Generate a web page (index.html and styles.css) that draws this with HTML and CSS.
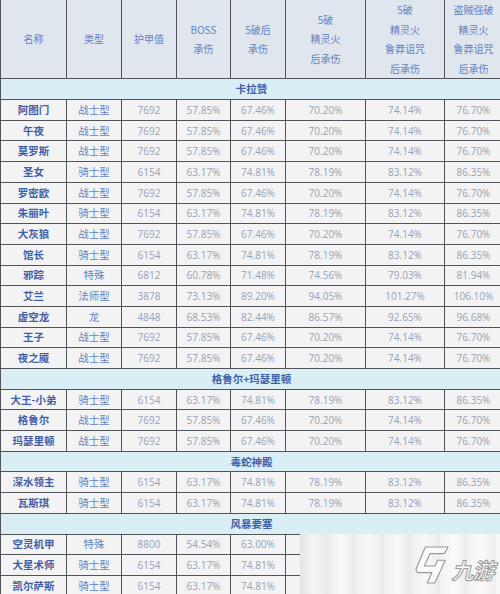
FILE: index.html
```html
<!DOCTYPE html>
<html>
<head>
<meta charset="utf-8">
<link rel="stylesheet" href="styles.css">
</head>
<body>
<div class="page">
<table class="tbl">
<colgroup>
<col class="c1"><col class="c2"><col class="c3"><col class="c4"><col class="c5"><col class="c6"><col class="c7"><col class="c8">
</colgroup>
<thead>
<tr class="head">
<th>名称</th><th>类型</th><th>护甲值</th><th>BOSS<br>承伤</th><th>5破后<br>承伤</th><th>5破<br>精灵火<br>后承伤</th><th>5破<br>精灵火<br>鲁莽诅咒<br>后承伤</th><th>盗贼强破<br>精灵火<br>鲁莽诅咒<br>后承伤</th>
</tr>
</thead>
<tbody>
<tr class="sec"><td colspan="8">卡拉赞</td></tr>
<tr><td class="n">阿图门</td><td class="t">战士型</td><td>7692</td><td>57.85%</td><td>67.46%</td><td>70.20%</td><td>74.14%</td><td>76.70%</td></tr>
<tr><td class="n">午夜</td><td class="t">战士型</td><td>7692</td><td>57.85%</td><td>67.46%</td><td>70.20%</td><td>74.14%</td><td>76.70%</td></tr>
<tr><td class="n">莫罗斯</td><td class="t">战士型</td><td>7692</td><td>57.85%</td><td>67.46%</td><td>70.20%</td><td>74.14%</td><td>76.70%</td></tr>
<tr><td class="n">圣女</td><td class="t">骑士型</td><td>6154</td><td>63.17%</td><td>74.81%</td><td>78.19%</td><td>83.12%</td><td>86.35%</td></tr>
<tr><td class="n">罗密欧</td><td class="t">战士型</td><td>7692</td><td>57.85%</td><td>67.46%</td><td>70.20%</td><td>74.14%</td><td>76.70%</td></tr>
<tr><td class="n">朱丽叶</td><td class="t">骑士型</td><td>6154</td><td>63.17%</td><td>74.81%</td><td>78.19%</td><td>83.12%</td><td>86.35%</td></tr>
<tr><td class="n">大灰狼</td><td class="t">战士型</td><td>7692</td><td>57.85%</td><td>67.46%</td><td>70.20%</td><td>74.14%</td><td>76.70%</td></tr>
<tr><td class="n">馆长</td><td class="t">骑士型</td><td>6154</td><td>63.17%</td><td>74.81%</td><td>78.19%</td><td>83.12%</td><td>86.35%</td></tr>
<tr><td class="n">邪踪</td><td class="t">特殊</td><td>6812</td><td>60.78%</td><td>71.48%</td><td>74.56%</td><td>79.03%</td><td>81.94%</td></tr>
<tr><td class="n">艾兰</td><td class="t">法师型</td><td>3878</td><td>73.13%</td><td>89.20%</td><td>94.05%</td><td>101.27%</td><td>106.10%</td></tr>
<tr><td class="n">虚空龙</td><td class="t">龙</td><td>4848</td><td>68.53%</td><td>82.44%</td><td>86.57%</td><td>92.65%</td><td>96.68%</td></tr>
<tr><td class="n">王子</td><td class="t">战士型</td><td>7692</td><td>57.85%</td><td>67.46%</td><td>70.20%</td><td>74.14%</td><td>76.70%</td></tr>
<tr><td class="n">夜之魇</td><td class="t">战士型</td><td>7692</td><td>57.85%</td><td>67.46%</td><td>70.20%</td><td>74.14%</td><td>76.70%</td></tr>
<tr class="sec"><td colspan="8">格鲁尔+玛瑟里顿</td></tr>
<tr><td class="n">大王-小弟</td><td class="t">骑士型</td><td>6154</td><td>63.17%</td><td>74.81%</td><td>78.19%</td><td>83.12%</td><td>86.35%</td></tr>
<tr><td class="n">格鲁尔</td><td class="t">战士型</td><td>7692</td><td>57.85%</td><td>67.46%</td><td>70.20%</td><td>74.14%</td><td>76.70%</td></tr>
<tr><td class="n">玛瑟里顿</td><td class="t">战士型</td><td>7692</td><td>57.85%</td><td>67.46%</td><td>70.20%</td><td>74.14%</td><td>76.70%</td></tr>
<tr class="sec"><td colspan="8">毒蛇神殿</td></tr>
<tr><td class="n">深水领主</td><td class="t">骑士型</td><td>6154</td><td>63.17%</td><td>74.81%</td><td>78.19%</td><td>83.12%</td><td>86.35%</td></tr>
<tr><td class="n">瓦斯琪</td><td class="t">骑士型</td><td>6154</td><td>63.17%</td><td>74.81%</td><td>78.19%</td><td>83.12%</td><td>86.35%</td></tr>
<tr class="sec"><td colspan="8">风暴要塞</td></tr>
<tr><td class="n">空灵机甲</td><td class="t">特殊</td><td>8800</td><td>54.54%</td><td>63.00%</td><td></td><td></td><td></td></tr>
<tr><td class="n">大星术师</td><td class="t">骑士型</td><td>6154</td><td>63.17%</td><td>74.81%</td><td></td><td></td><td></td></tr>
<tr><td class="n">凯尔萨斯</td><td class="t">骑士型</td><td>6154</td><td>63.17%</td><td>74.81%</td><td></td><td></td><td></td></tr>
</tbody>
</table>
<div class="mark">
<svg class="logo" viewBox="0 0 40 42" width="38" height="40">
<path d="M14 2 L38 2 L34 9 L19 9 L13 22 L24 22 L27 16 L35 16 L24 40 L16 40 L21 29 L6 29 L4 26 Z" fill="#fbfbfb" stroke="#9a9a9a" stroke-width="1.2" stroke-linejoin="round"/>
</svg>
<span class="brand">九游</span>
</div>
</div>
</body>
</html>
```
FILE: styles.css
```css
html, body {
  margin: 0;
  padding: 0;
  background: #ffffff;
}
.page {
  position: relative;
  width: 500px;
  height: 594px;
  overflow: hidden;
}
.tbl {
  border-collapse: collapse;
  table-layout: fixed;
  width: 502px;
  margin-top: -1px;
  font-family: "Noto Sans CJK SC", "Noto Sans", sans-serif;
  font-size: 10px;
}
.c1 { width: 66px; }
.c2 { width: 55px; }
.c3 { width: 55px; }
.c4 { width: 54px; }
.c5 { width: 55px; }
.c6 { width: 80px; }
.c7 { width: 79px; }
.c8 { width: 58px; }
.tbl th, .tbl td {
  border: 1px solid #505357;
  padding: 0;
  text-align: center;
  vertical-align: middle;
  white-space: nowrap;
  overflow: hidden;
}
.head th {
  height: 78px;
  background: #dfe6ee;
  color: #6483c2;
  font-weight: normal;
  line-height: 19.6px;
}
.tbl tbody tr {
  height: 20.7px;
}
.tbl tbody td {
  background: #f3f3f4;
  color: #97a2b6;
  font-family: "Open Sans", "Noto Sans", sans-serif;
  font-size: 10px;
  line-height: 12px;
}
.tbl tbody td.n {
  font-family: "Noto Sans CJK SC", sans-serif;
  color: #3f5fa6;
  font-weight: bold;
  font-size: 10.5px;
}
.tbl tbody td.t {
  font-family: "Noto Sans CJK SC", sans-serif;
  color: #6283c4;
  font-size: 10.5px;
}
.tbl tbody tr.sec td {
  background: #d9eef5;
  color: #3f5fa6;
  font-family: "Noto Sans CJK SC", sans-serif;
  font-weight: bold;
  font-size: 10.5px;
}
.mark {
  position: absolute;
  left: 300px;
  top: 534px;
  width: 200px;
  height: 60px;
  background:
    repeating-linear-gradient(90deg, rgba(255,255,255,0) 0px, rgba(255,255,255,0.5) 14px, rgba(220,220,220,0.3) 28px),
    linear-gradient(90deg, #e4e4e4 0%, #f2f2f2 20%, #efefef 50%, #f6f6f6 100%);
  display: flex;
  align-items: center;
  justify-content: flex-end;
  gap: 4px;
  padding-right: 4px;
  box-sizing: border-box;
}
.logo {
  display: block;
  margin-top: 2px;
}
.brand {
  font-family: "Noto Sans CJK SC", sans-serif;
  font-size: 22px;
  font-weight: bold;
  color: #fbfbfb;
  -webkit-text-stroke: 1px #9a9a9a;
  letter-spacing: -1px;
  margin-top: 10px;
  transform: skewX(-14deg);
}
```
